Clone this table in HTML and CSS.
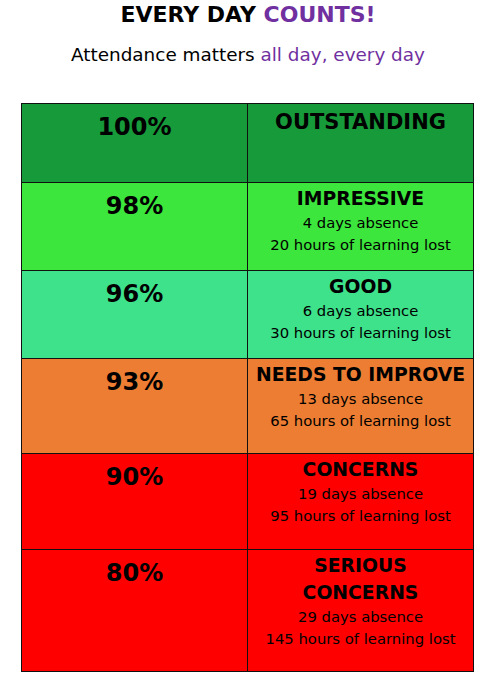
FILE: index.html
```html
<!DOCTYPE html>
<html lang="en">
<head>
<meta charset="utf-8">
<title>Every Day Counts</title>
<link rel="stylesheet" href="styles.css">
</head>
<body>
<header class="intro">
  <h1 class="title">EVERY DAY <span class="accent">COUNTS!</span></h1>
  <p class="subtitle">Attendance matters <span class="accent">all day, every day</span></p>
</header>
<main class="chart">
  <div class="cell pct band-outstanding">100%</div>
  <div class="cell info band-outstanding"><div class="label label-big">OUTSTANDING</div></div>

  <div class="cell pct band-impressive">98%</div>
  <div class="cell info band-impressive">
    <div class="label">IMPRESSIVE</div>
    <div class="detail">4 days absence</div>
    <div class="detail">20 hours of learning lost</div>
  </div>

  <div class="cell pct band-good">96%</div>
  <div class="cell info band-good">
    <div class="label">GOOD</div>
    <div class="detail">6 days absence</div>
    <div class="detail">30 hours of learning lost</div>
  </div>

  <div class="cell pct band-improve">93%</div>
  <div class="cell info band-improve">
    <div class="label">NEEDS TO IMPROVE</div>
    <div class="detail">13 days absence</div>
    <div class="detail">65 hours of learning lost</div>
  </div>

  <div class="cell pct band-concern">90%</div>
  <div class="cell info band-concern">
    <div class="label">CONCERNS</div>
    <div class="detail">19 days absence</div>
    <div class="detail">95 hours of learning lost</div>
  </div>

  <div class="cell pct band-concern">80%</div>
  <div class="cell info info-tight band-concern">
    <div class="label label-wrap">SERIOUS<br>CONCERNS</div>
    <div class="detail">29 days absence</div>
    <div class="detail">145 hours of learning lost</div>
  </div>
</main>
</body>
</html>
```

FILE: styles.css
```css
html, body {
  margin: 0;
  padding: 0;
  background: #ffffff;
}

body {
  width: 496px;
  font-family: "DejaVu Sans", "Noto Sans", sans-serif;
  color: #000000;
}

.intro {
  text-align: center;
}

.title {
  margin: 0;
  padding-top: 1px;
  font-size: 22px;
  line-height: 28px;
  font-weight: bold;
}

.subtitle {
  margin: 14px 0 0 0;
  font-size: 18.4px;
  line-height: 24px;
  font-weight: normal;
}

.accent {
  color: #7030a0;
}

.chart {
  margin: 36px 0 0 21px;
  width: 452px;
  display: grid;
  grid-template-columns: 226px 226px;
  grid-template-rows: 79px 88px 88px 95px 96px 122px;
  border-top: 1px solid #111111;
  border-left: 1px solid #111111;
}

.cell {
  box-sizing: border-box;
  border-right: 1px solid #111111;
  border-bottom: 1px solid #111111;
  text-align: center;
}

.pct {
  padding-top: 8px;
  font-size: 24px;
  line-height: 30px;
  font-weight: bold;
}

.info {
  padding-top: 3px;
}

.info-tight {
  padding-top: 2px;
}

.label {
  font-size: 18.8px;
  line-height: 26px;
  font-weight: bold;
}

.label-wrap {
  line-height: 27px;
}

.label-big {
  font-size: 21px;
  line-height: 30px;
}

.detail {
  font-size: 14.8px;
  line-height: 22px;
}

.band-outstanding { background: #179a3a; }
.band-impressive { background: #3ce63c; }
.band-good { background: #3ee28b; }
.band-improve { background: #ed7d32; }
.band-concern { background: #ff0000; }
```
